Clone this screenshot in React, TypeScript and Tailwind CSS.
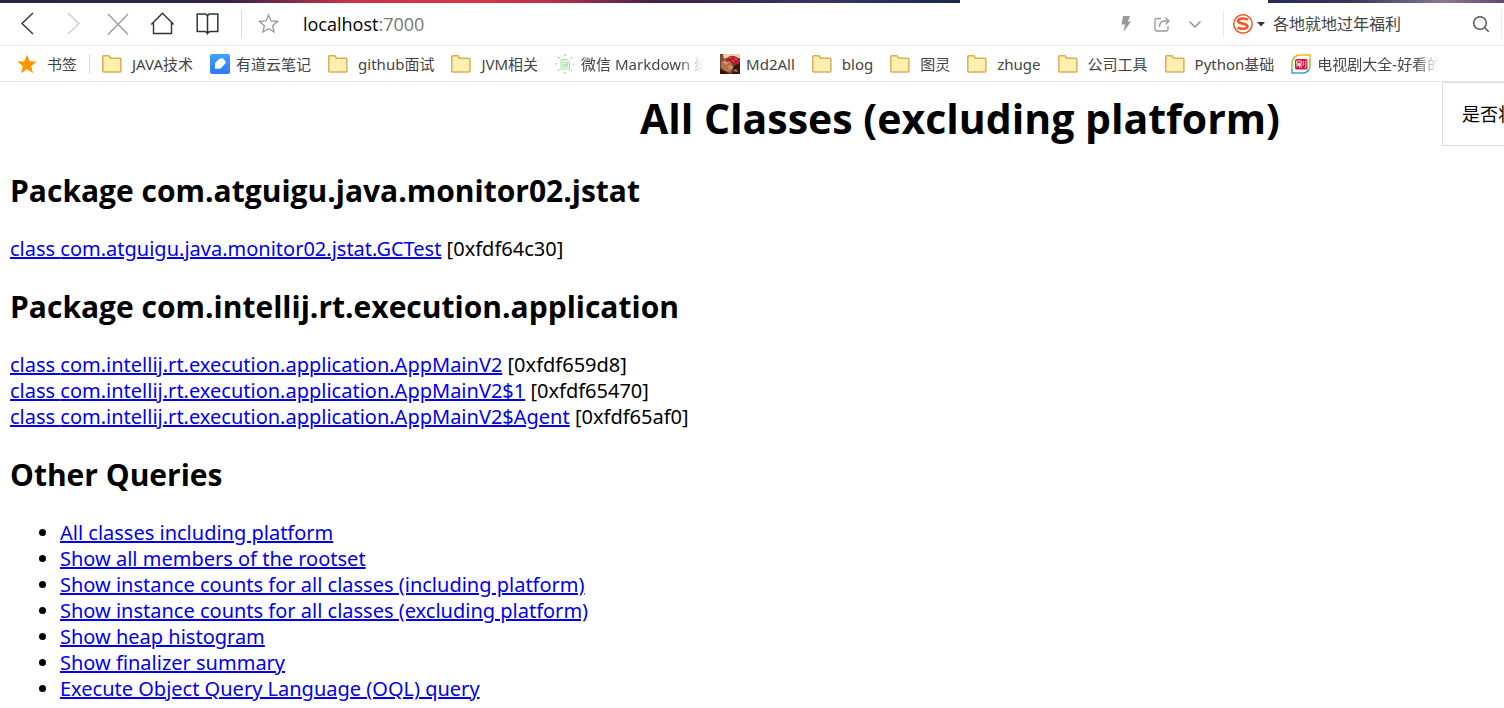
import type { ReactNode } from "react";

function Folder() {
  return (
    <svg width="20" height="18" viewBox="0 0 20 18" className="shrink-0">
      <path d="M.8 1.5Q.8.8 1.5.8H7l1.4 2.4h9.6q.9 0 .9.9V16q0 .9-.9.9H1.700q-.9 0-.9-.9z" fill="#fff0b0" stroke="#dcae58" strokeWidth="1.5" />
    </svg>
  );
}

function Star() {
  return (
    <svg width="20" height="20" viewBox="0 0 20 20" className="shrink-0">
      <path d="M10 .6l2.6 6.6 7.1.4-5.5 4.6 1.8 7-6-3.9-6 3.9 1.8-7L.3 7.6l7.1-.4z" fill="#ff9600" />
    </svg>
  );
}

function Note() {
  return (
    <svg width="20" height="20" viewBox="0 0 20 20" className="shrink-0">
      <defs>
        <linearGradient id="note" x1="0" y1="0" x2="0" y2="1">
          <stop stopColor="#43a0ff" />
          <stop offset="1" stopColor="#2f78fb" />
        </linearGradient>
      </defs>
      <rect width="20" height="20" rx="2" fill="url(#note)" />
      <path d="M5 14.800V10q0-1 .7-1.700L9 5.200Q10 4.200 11.300 4.200h.5q.8 0 1.400.6l1.700 1.700q.6.600.6 1.400v.5q0 1-.7 1.700l-3.400 3.700q-.8.900-2 .9z" fill="#fff" />
    </svg>
  );
}

function Markdown() {
  return (
    <svg width="20" height="20" viewBox="0 0 20 20" fill="none" className="shrink-0">
      <path d="M6 5.500h6l2.500 2.300V15H6z" stroke="#a6e5a4" fill="#e9f9e8" />
      <path d="M8 8.500h4.500v4H8zM8 10.500h4.500M10.200 10.500v2" stroke="#a6e5a4" />
      <circle cx="10" cy="10" r="8.800" stroke="#8fdd8d" strokeWidth="1.500" strokeDasharray="1.500 5.410" strokeDashoffset=".7" />
    </svg>
  );
}

function Avatar() {
  return (
    <svg width="20" height="20" viewBox="0 0 20 20" className="shrink-0">
      <rect width="20" height="20" fill="#74402c" />
      <path d="M3 0h17v4h-5l-4-2-4 2-4 1z" fill="#ecd3a4" />
      <path d="M0 1h3l1 4-2 3H0z" fill="#7a4a34" />
      <path d="M1 8l5-3 5 3 2 6-3 4-6-1-3-4z" fill="#b0704c" />
      <path d="M3 8l4-2 2 3-4 2zM8 12l4-1 1 3-4 2z" fill="#cf936a" />
      <path d="M6 5q4-4 8-3 5 1 5 6l-2 3-4-1-3-3-4 1z" fill="#b81c2c" />
      <path d="M9 4l3-1M14 4l3 2M12 6l2 1" stroke="#e06a6a" />
      <path d="M0 15l5 2 4 3H0zM14 12l6-3v11h-8z" fill="#321610" />
      <path d="M13 17l3-2 2 3z" fill="#b88447" />
    </svg>
  );
}

function Tv() {
  return (
    <svg width="20" height="20" viewBox="0 0 20 20" fill="none" strokeWidth="1.500" className="shrink-0">
      <path d="M3 4Q5 1 9 1h10v5" stroke="#f6b51f" />
      <path d="M19 5v7q0 3-2 5" stroke="#8cc63e" />
      <path d="M17.500 16q-2 3-6 3H1v-4" stroke="#35a8e0" />
      <path d="M1 16V9q0-3 2.500-5.500" stroke="#8cc63e" />
      <rect x="4" y="5" width="12.500" height="10.500" rx="1.500" fill="#d4143c" />
      <path d="M5.500 7h5v2.300h-5zM6 9.300V13M6.500 10.500h4M8.500 9v5M6.600 11.500h3.600V14M12.300 7v5M14.700 6.500v7.200h-1" stroke="#fff" strokeWidth=".8" />
    </svg>
  );
}

function IconButton({ label, children }: { label: string; children: ReactNode }) {
  return (
    <button type="button" aria-label={label} className="flex size-6 shrink-0 items-center justify-center">
      {children}
    </button>
  );
}

function Bookmark({ icon, label, wide, clip }: { icon: ReactNode; label: string; wide?: boolean; clip?: boolean }) {
  return (
    <a href="#" className={`flex shrink-0 items-center ${wide ? "gap-[10px]" : "gap-[6px]"}`}>
      {icon}
      <span className={clip ? "w-[122px] overflow-hidden pt-0.5 whitespace-nowrap [mask-image:linear-gradient(to_right,#000_80%,transparent)]" : "pt-0.5 whitespace-nowrap"}>{label}</span>
    </a>
  );
}

function NavBar() {
  return (
    <div className="flex h-[43px] items-center border-b border-[#e8e8e8] pl-4">
      <nav className="flex items-center gap-[21px]">
        <IconButton label="Back">
          <svg width="24" height="24" fill="none" stroke="#333" strokeWidth="1.400"><path d="M17 1L6 11.500 17 22" /></svg>
        </IconButton>
        <IconButton label="Forward">
          <svg width="24" height="24" fill="none" stroke="#ccc" strokeWidth="1.400"><path d="M7 1l11 10.500L7 22" /></svg>
        </IconButton>
        <IconButton label="Stop">
          <svg width="24" height="24" fill="none" stroke="#999" strokeWidth="1.300"><path d="M2 2L22 22.500M22 2L2 22.500" /></svg>
        </IconButton>
        <IconButton label="Home">
          <svg width="24" height="24" fill="none" stroke="#333" strokeWidth="1.400"><path d="M.3 12.500L11.500 1.300 22.700 12.500M2.500 11v10.500h18V11" /></svg>
        </IconButton>
        <IconButton label="Reader">
          <svg width="24" height="24" fill="none" stroke="#333" strokeWidth="1.500"><path d="M11.500 4q-.8-2-2.500-2H1.200v17.500h7.300q2 0 3 2 1-2 3-2h7.300V2H14q-1.700 0-2.500 2zv17" /></svg>
        </IconButton>
      </nav>
      <div className="ml-[21px] h-7 w-px bg-[#dedede]" />
      <div className="ml-[15px] flex items-center">
        <IconButton label="Add bookmark">
          <svg width="24" height="24" fill="none" stroke="#999" strokeWidth="1.300"><path d="M11.500 3l2.500 6 6.500.5-4.900 4.200 1.500 6.300-5.600-3.300L5.900 20l1.500-6.300-4.900-4.200L9 9z" /></svg>
        </IconButton>
      </div>
      <div className="ml-[22px] flex-1 text-[18px] text-black">
        localhost<span className="text-[#777]">:7000</span>
      </div>
      <div className="flex items-center gap-[11px]">
        <IconButton label="Turbo">
          <svg width="24" height="24"><path d="M9 4h7l-2 5.500h3L9.500 20l1.500-7.500H7.500z" fill="#999" /></svg>
        </IconButton>
        <IconButton label="Share">
          <svg width="24" height="24" fill="none" stroke="#999" strokeWidth="1.300"><path d="M12 6.500H8q-2 0-2 2v8.500q0 2 2 2h9q2 0 2-2v-3M10.500 15q0-6 5-6h4M16.500 5.500L20 9l-3.500 3.500" /></svg>
        </IconButton>
        <IconButton label="More">
          <svg width="24" height="24" fill="none" stroke="#888" strokeWidth="1.300"><path d="M5.500 9.500L11 15l5.500-5.500" /></svg>
        </IconButton>
      </div>
      <div className="ml-[15px] h-7 w-px bg-[#e8e8e8]" />
      <button type="button" aria-label="Choose search engine" className="ml-[9px] flex items-center gap-1">
        <svg width="20" height="20" viewBox="0 0 20 20" fill="none">
          <circle cx="10" cy="10" r="9.200" stroke="#fb5020" strokeWidth="1.500" />
          <path d="M15 5.600Q9.500 3.500 6.200 5.200q-2.400 2 .5 3.600l5.900 1.600q3.200 1.700.6 3.700-3.500 1.600-8.700-.5" stroke="#fb5020" strokeWidth="2.600" />
        </svg>
        <svg width="8" height="5"><path d="M0 0h8L4 4.500z" fill="#333" /></svg>
      </button>
      <input aria-label="Search" defaultValue="各地就地过年福利" className="ml-2 w-[196px] bg-transparent text-[16px] text-[#444] outline-none" />
      <IconButton label="Search">
        <svg width="24" height="24" fill="none" stroke="#555" strokeWidth="1.500"><circle cx="11" cy="11" r="6.300" /><path d="M15.700 15.700l4 4" /></svg>
      </IconButton>
      <div className="ml-2 mr-[2px] h-7 w-px bg-[#e8e8e8]" />
    </div>
  );
}

function BookmarkBar() {
  return (
    <div className="flex h-9 items-center gap-[17px] overflow-hidden border-b border-[#e8e8e8] pl-[17px] font-['Noto_Sans','Noto_Sans_CJK_SC',sans-serif] text-[15px] text-[#444]">
      <div className="flex shrink-0 items-center gap-3">
        <Bookmark icon={<Star />} label="书签" wide />
        <div className="h-5 w-px bg-[#dedede]" />
        <Bookmark icon={<Folder />} label="JAVA技术" wide />
      </div>
      <Bookmark icon={<Note />} label="有道云笔记" />
      <Bookmark icon={<Folder />} label="github面试" wide />
      <Bookmark icon={<Folder />} label="JVM相关" wide />
      <Bookmark icon={<Markdown />} label="微信 Markdown 编" clip />
      <Bookmark icon={<Avatar />} label="Md2All" />
      <Bookmark icon={<Folder />} label="blog" wide />
      <Bookmark icon={<Folder />} label="图灵" wide />
      <Bookmark icon={<Folder />} label="zhuge" wide />
      <Bookmark icon={<Folder />} label="公司工具" wide />
      <Bookmark icon={<Folder />} label="Python基础" wide />
      <Bookmark icon={<Tv />} label="电视剧大全-好看的" clip />
    </div>
  );
}

function ClassLink({ name, id }: { name: string; id: string }) {
  return (
    <div>
      <a href="#" className="text-[#0000ee] underline">class {name}</a> [{id}]
    </div>
  );
}

function Heading({ children }: { children: ReactNode }) {
  return <h2 className="my-[25px] font-['Open_Sans',sans-serif] text-[30px] leading-10 font-bold">{children}</h2>;
}

const queries = [
  "All classes including platform",
  "Show all members of the rootset",
  "Show instance counts for all classes (including platform)",
  "Show instance counts for all classes (excluding platform)",
  "Show heap histogram",
  "Show finalizer summary",
  "Execute Object Query Language (OQL) query",
];

export default function App() {
  return (
    <div className="overflow-hidden bg-white font-['Open_Sans','Noto_Sans_CJK_SC',sans-serif]">
      <header>
        <div className="flex h-[3px]">
          <div className="w-[960px] bg-[linear-gradient(to_right,#2c2346_0%,#35234a_24%,#c93248_36%,#d93345_50%,#b5304c_58%,#42224a_68%,#3b2850_75%,#353860_86%,#1c2748_100%)]" />
          <div className="w-[308px]" />
          <div className="flex-1 bg-[linear-gradient(to_right,#252c50,#39355c_35%,#8a7794_75%,#65446e)]" />
        </div>
        <NavBar />
        <BookmarkBar />
      </header>
      <main className="relative px-[10px] pt-[10px] pb-1 font-['Noto_Sans','Noto_Sans_CJK_SC',sans-serif] text-[20px] leading-[26px] text-black">
        <h1 className="pb-0.5 pl-[416px] text-center font-['Open_Sans',sans-serif] text-[41px] leading-[52px] font-bold">All Classes (excluding platform)</h1>
        <aside className="absolute top-0 right-0 flex h-16 w-[62px] items-center overflow-hidden border border-r-0 border-[#ddd] bg-white pl-[19px] text-[18px] whitespace-nowrap">
          是否将
        </aside>
        <Heading>Package com.atguigu.java.monitor02.jstat</Heading>
        <ClassLink name="com.atguigu.java.monitor02.jstat.GCTest" id="0xfdf64c30" />
        <Heading>Package com.intellij.rt.execution.application</Heading>
        <ClassLink name="com.intellij.rt.execution.application.AppMainV2" id="0xfdf659d8" />
        <ClassLink name="com.intellij.rt.execution.application.AppMainV2$1" id="0xfdf65470" />
        <ClassLink name="com.intellij.rt.execution.application.AppMainV2$Agent" id="0xfdf65af0" />
        <Heading>Other Queries</Heading>
        <ul className="list-disc pl-[50px]">
          {queries.map((query) => (
            <li key={query}>
              <a href="#" className="text-[#0000ee] underline">{query}</a>
            </li>
          ))}
        </ul>
      </main>
    </div>
  );
}
